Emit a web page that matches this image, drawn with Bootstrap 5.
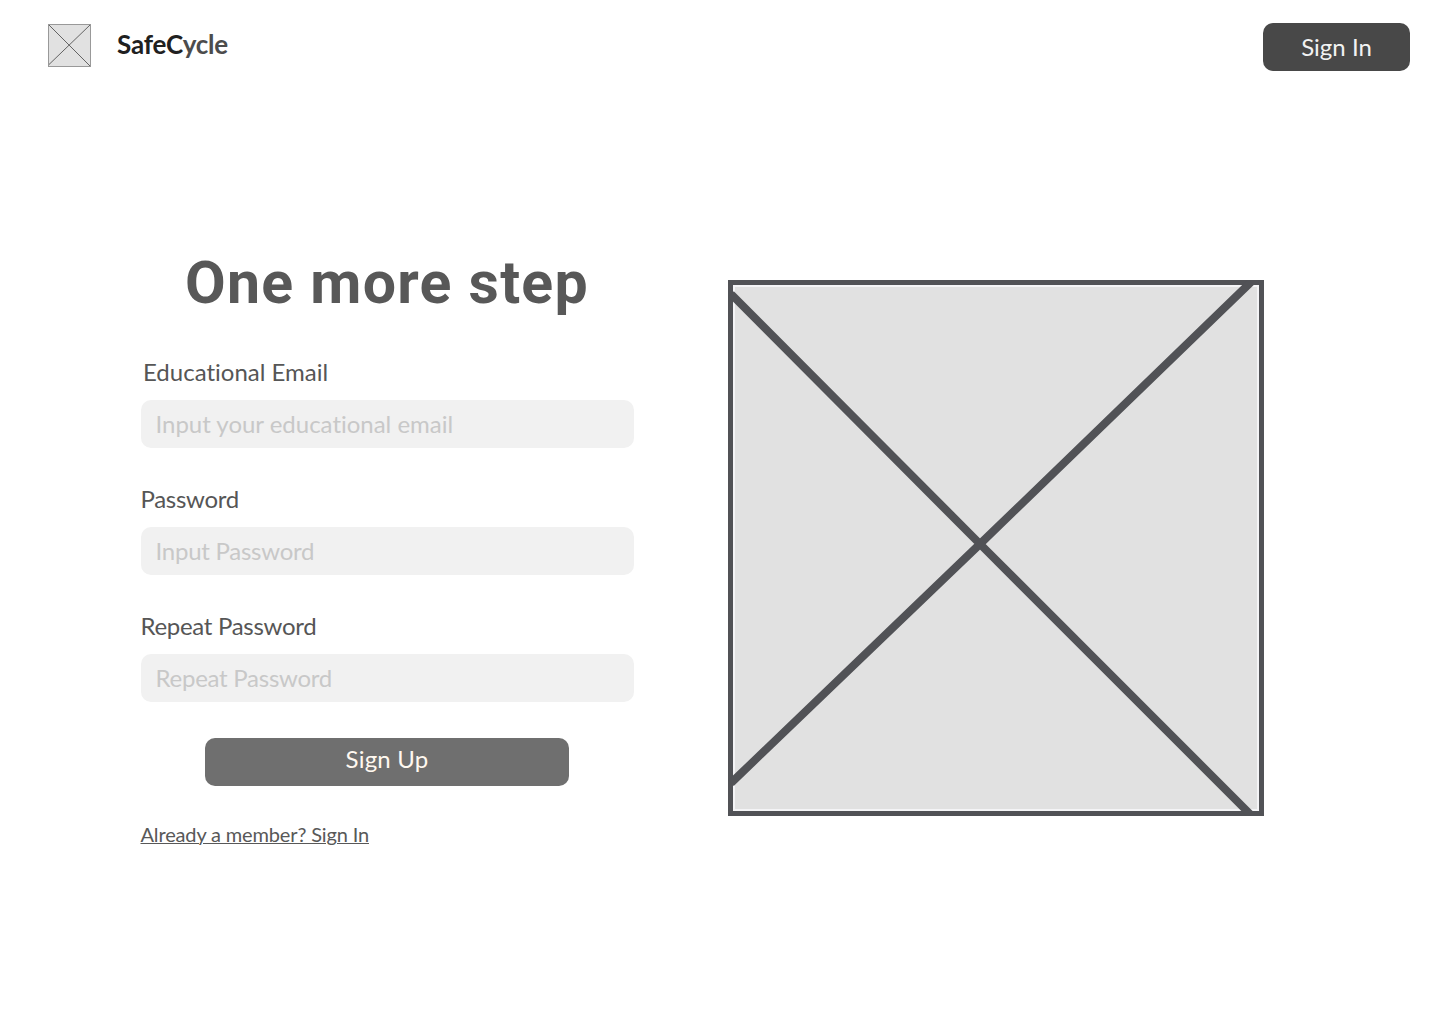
<!DOCTYPE html>
<html lang="en">
<head>
<meta charset="utf-8">
<meta name="viewport" content="width=device-width, initial-scale=1">
<title>SafeCycle</title>
<link href="https://cdn.jsdelivr.net/npm/bootstrap@5.3.0/dist/css/bootstrap.min.css" rel="stylesheet">
<style>
body{font-family:Lato,"Open Sans",sans-serif;color:#565656;background:#fff;font-variant-ligatures:none}
.site-bar{height:93px;padding:0 30px 0 48px}
.site-logo{gap:26px;margin-top:-2px}
.brand-name{font-size:26px;font-weight:700;letter-spacing:-.2px;line-height:32px;color:#4c4c4c;margin-top:-4px}
.brand-name b{color:#202020;font-weight:700}
.btn-flat{height:48px;border:0;border-radius:10px;font-size:24px;line-height:28px;padding:0}
.btn-login{width:147px;background:#484848;color:#f2f2f2}
.btn-login:hover{background:#3c3c3c;color:#fff}
.btn-join{width:364px;background:#6f6f6f;color:#fff8f0;letter-spacing:.2px;padding-bottom:5px;margin-top:36px}
.btn-join:hover{background:#606060;color:#fff8f0}
.page-main{padding:153.5px 0 0 140.5px;gap:94.5px}
.signup{width:493px}
.headline{font-family:Roboto,sans-serif;font-weight:700;font-size:59px;line-height:72px;letter-spacing:1.25px;margin:0 0 39px;color:#585858}
.field{margin-bottom:37px}
.field:last-of-type{margin-bottom:0}
.field label{display:block;font-size:24px;line-height:28px;margin-bottom:14px;letter-spacing:-.3px}
.field .l-email{padding-left:2.5px;letter-spacing:0}
.field .form-control{height:48px;border:0;border-radius:10px;background:#f1f1f1;font-size:24px;padding:0 15px 1px;letter-spacing:-.25px;font-variant-ligatures:none}
.field #email{letter-spacing:-.01px}
.field .form-control::placeholder{color:#c8c8c8;opacity:1}
.member-link{font-size:20px;line-height:24px;margin-top:36px;color:#585858;letter-spacing:-.15px;text-underline-offset:1px;text-decoration-thickness:1px}
.picture{margin-top:33.5px}
</style>
<script src="https://cdn.jsdelivr.net/npm/bootstrap@5.3.0/dist/js/bootstrap.bundle.min.js"></script>
</head>
<body>
<header class="site-bar d-flex align-items-center justify-content-between">
  <a href="#" class="site-logo d-flex align-items-center text-decoration-none">
    <svg width="43" height="43" viewBox="0 0 43 43"><rect x=".5" y=".5" width="42" height="42" fill="#e1e1e1" stroke="#999"/><path d="M1 1L42 42M42 1L1 40.500" stroke="#555" stroke-width=".9"/></svg>
    <span class="brand-name"><b>SafeC</b>ycle</span>
  </a>
  <button class="btn btn-flat btn-login" type="button">Sign In</button>
</header>
<main class="page-main d-flex align-items-start">
  <form class="signup d-flex flex-column">
    <h1 class="headline text-center">One more step</h1>
    <div class="field"><label class="l-email" for="email">Educational Email</label><input class="form-control" id="email" type="email" placeholder="Input your educational email"></div>
    <div class="field"><label for="pass">Password</label><input class="form-control" id="pass" type="password" placeholder="Input Password"></div>
    <div class="field"><label for="again">Repeat Password</label><input class="form-control" id="again" type="password" placeholder="Repeat Password"></div>
    <button class="btn btn-flat btn-join align-self-center" type="button">Sign Up</button>
    <a href="#" class="member-link align-self-start">Already a member? Sign In</a>
  </form>
  <svg class="picture flex-shrink-0" width="536" height="536" viewBox="0 0 536 536">
    <rect width="536" height="536" fill="#515256"/>
    <rect x="5" y="5" width="526" height="526" fill="#f4f4f6"/>
    <rect x="7" y="7" width="522" height="522" fill="#e1e1e1"/>
    <path d="M3 14L252 264L522 534M523 2L252 264L3 503" fill="none" stroke="#515256" stroke-width="8"/>
  </svg>
</main>
</body>
</html>
